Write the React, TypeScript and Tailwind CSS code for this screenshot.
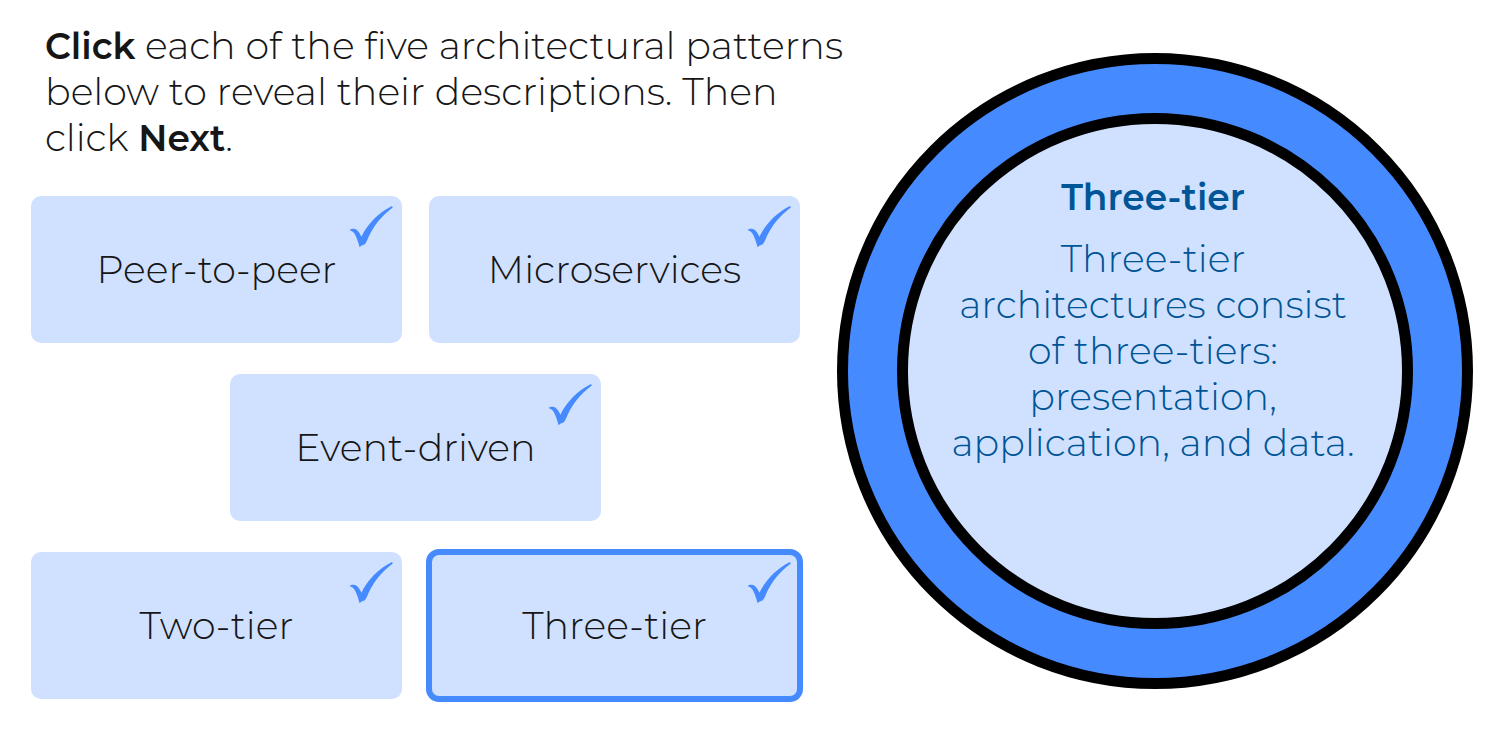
import { useState } from "react";

type Pattern = { name: string; description: string };

const patterns: Pattern[] = [
  { name: "Peer-to-peer", description: "Peer-to-peer architectures share work between equal nodes." },
  { name: "Microservices", description: "Microservices split an application into small services." },
  { name: "Event-driven", description: "Event-driven architectures react to events as they occur." },
  { name: "Two-tier", description: "Two-tier architectures consist of a client and a server." },
  {
    name: "Three-tier",
    description: "Three-tier architectures consist of three-tiers: presentation, application, and data.",
  },
];

const rows = [patterns.slice(0, 2), patterns.slice(2, 3), patterns.slice(3)];

function CheckMark() {
  return (
    <svg
      viewBox="0 0 45 43"
      aria-hidden="true"
      className="absolute top-[9px] right-2 h-[43px] w-[45px] fill-[#458aff]"
    >
      <path d="M0.500 25C2.500 23.400 5.600 23.200 7.600 24.800C9.600 26.400 11.200 29 12.400 31.800C18.500 19 29.500 7.600 43 1L43.800 2.400C32.500 10.500 25 20.500 19.500 32C18 35.500 17 37.800 15.800 39.300C14.400 40.300 12.300 40.300 10.600 42.200C9.200 37 7.800 32.500 5.600 28.800C4.300 26.800 3 25.800 0.500 25Z" />
    </svg>
  );
}

export default function App() {
  const [selected, setSelected] = useState("Three-tier");
  const current = patterns.find((p) => p.name === selected) ?? patterns[0];

  return (
    <main className="grid grid-cols-[minmax(0,769fr)_minmax(0,636fr)] items-start gap-x-[37px] bg-white pr-[17px] pb-8 pl-[31px] font-['Montserrat','Inter',sans-serif] text-[38px] leading-[46px] font-light text-[#161616] [font-variant-ligatures:none]">
      <section className="pt-[23px]">
        <p className="pl-3.5 whitespace-nowrap">
          <strong className="text-[36px] font-semibold">Click</strong> each of the five architectural patterns
          <br />
          below to reveal their descriptions. Then
          <br />
          click <strong className="text-[36px] font-semibold">Next</strong>.
        </p>
        <div className="mt-[35px] flex flex-col gap-[31px]">
          {rows.map((row) => (
            <div key={row[0].name} className="flex justify-center gap-[27px]">
              {row.map(({ name }) => (
                <button
                  key={name}
                  type="button"
                  aria-pressed={name === selected}
                  onClick={() => setSelected(name)}
                  className={`relative h-[147px] w-[calc(50%-13px)] cursor-pointer rounded-[10px] bg-[#d0e1ff] ${
                    name === selected ? "outline-6 -outline-offset-3 outline-[#458aff]" : ""
                  }`}
                >
                  {name}
                  <CheckMark />
                </button>
              ))}
            </div>
          ))}
        </div>
      </section>
      <section
        aria-live="polite"
        className="mt-[53px] aspect-square rounded-full border-[11px] border-black bg-[#458aff] p-[49px]"
      >
        <div className="flex h-full flex-col items-center gap-4 rounded-full border-[11px] border-black bg-[#d0e1ff] pt-[50px] pr-10 pl-9 text-center text-[#005596]">
          <h1 className="text-[36px] font-semibold">{current.name}</h1>
          <p>{current.description}</p>
        </div>
      </section>
    </main>
  );
}
